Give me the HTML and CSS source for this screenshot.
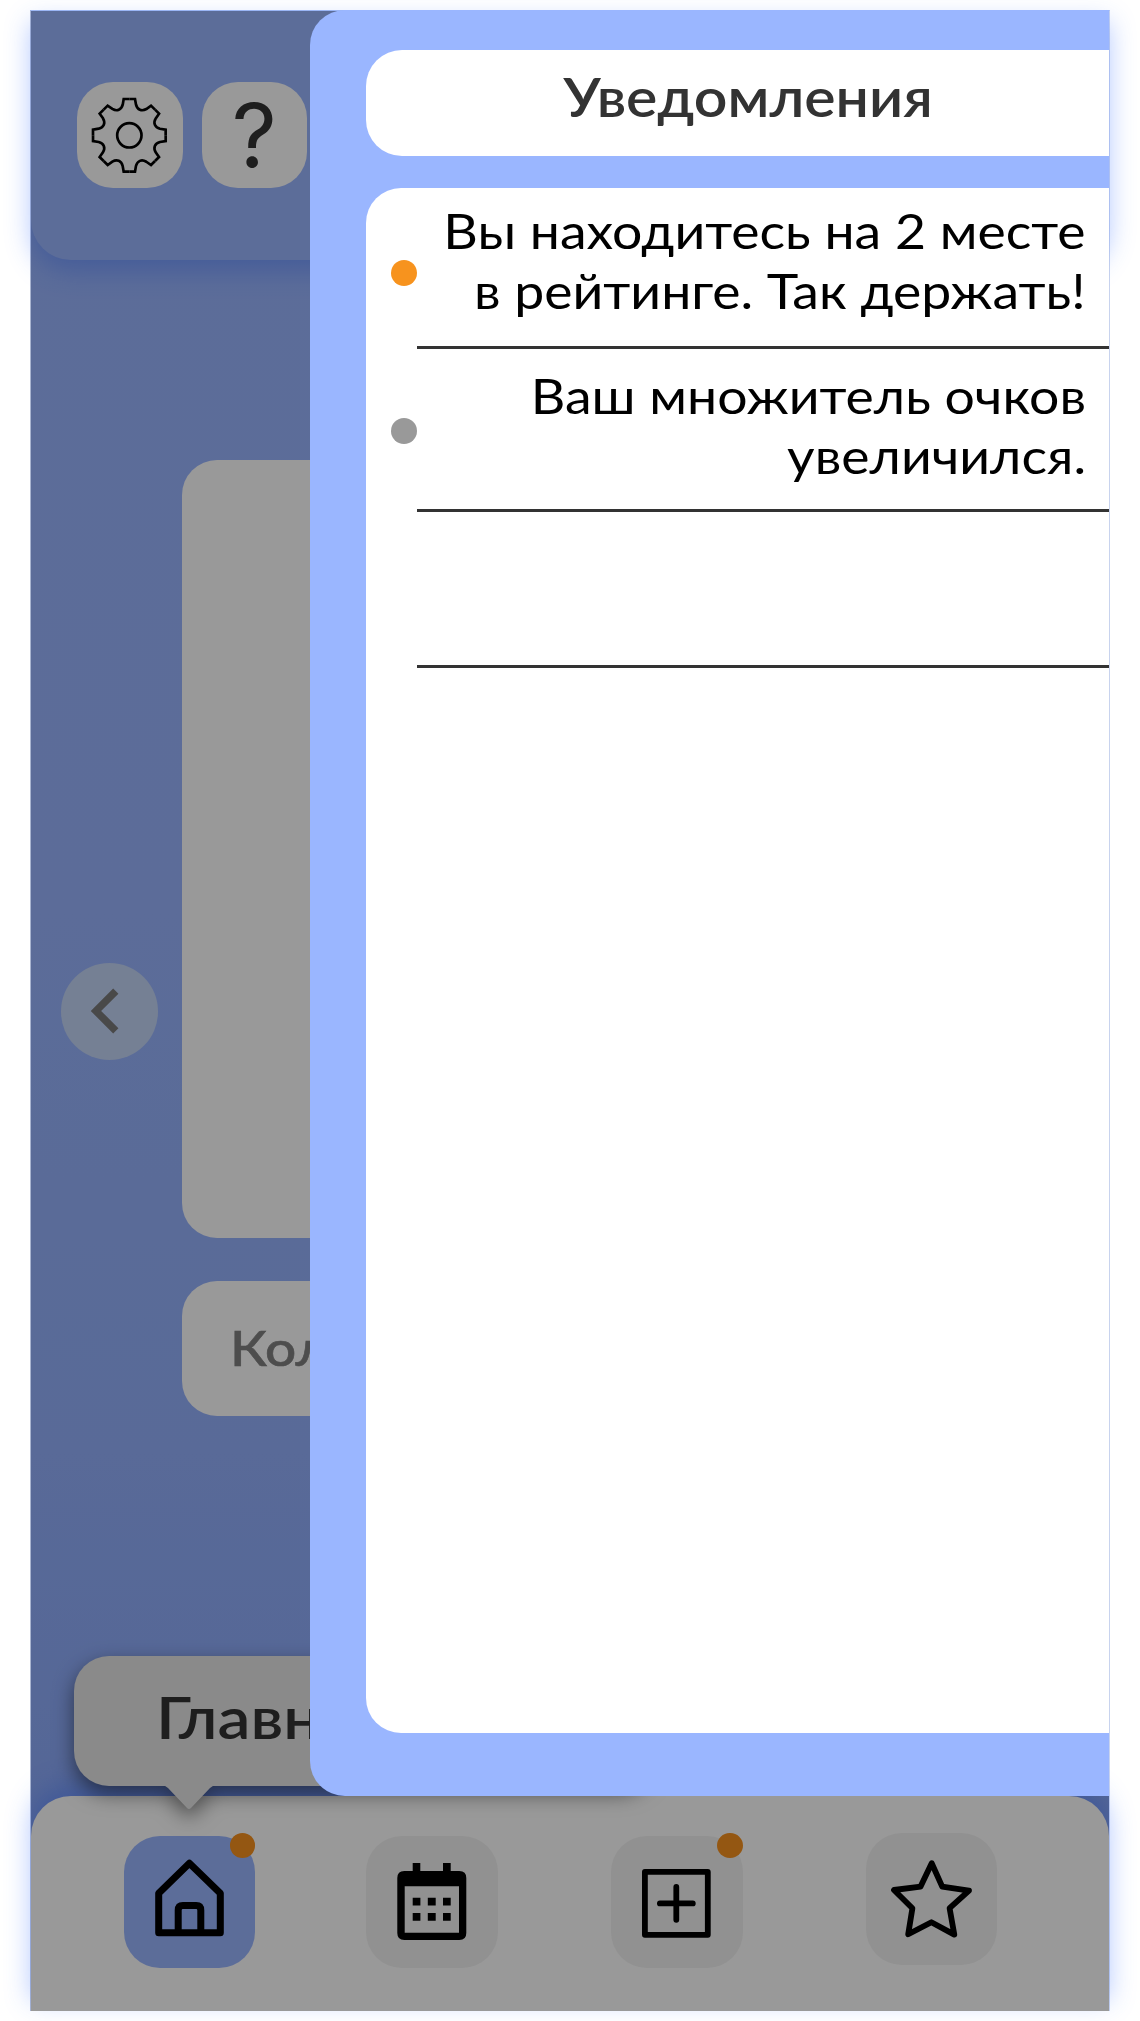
FILE: index.html
```html
<!DOCTYPE html>
<html lang="ru">
<head>
<meta charset="utf-8">
<title>Уведомления</title>
<link rel="stylesheet" href="styles.css">
</head>
<body>
<div class="phone">
  <header class="header">
    <button class="tool" aria-label="Настройки">
      <svg class="gear" viewBox="-115 -115 230 230">
        <defs><path id="tooth" d="M0-109H17L20-92C24-76 37-71 51-79L65-89L77-77"/></defs>
        <use href="#tooth"/><use href="#tooth" transform="rotate(45)"/><use href="#tooth" transform="rotate(90)"/><use href="#tooth" transform="rotate(135)"/><use href="#tooth" transform="rotate(180)"/><use href="#tooth" transform="rotate(225)"/><use href="#tooth" transform="rotate(270)"/><use href="#tooth" transform="rotate(315)"/>
        <circle r="36.5"/>
      </svg>
    </button>
    <button class="tool" aria-label="Помощь"><span class="question">?</span></button>
  </header>

  <main class="main">
    <button class="arrow" aria-label="Назад">
      <svg viewBox="0 0 97 97"><path d="M54.8 28.2L35 48L54.8 67.8"/></svg>
    </button>
    <div class="cards">
      <div class="card"></div>
      <div class="caption"><span class="caption-text">Кол</span></div>
    </div>
  </main>

  <nav class="nav">
    <a class="tab tab-active">
      <svg class="line" viewBox="0 0 131 131" stroke-width="7"><path d="M34.7 57.3L65.4 27.3L96.3 57.3V96.7H34.7ZM54.2 96.7V74.3Q54.2 69.6 58.9 69.6H72.2Q76.8 69.6 76.8 74.3V96.7"/></svg>
      <i class="badge"></i>
    </a>
    <a class="tab">
      <svg viewBox="0 0 131 131"><path fill-rule="evenodd" d="M46.7 35V27H54.3V35H77V27H84.7V35H93.3Q100.3 35 100.3 42V97Q100.3 104 93.3 104H38.3Q31.3 104 31.3 97V42Q31.3 35 38.3 35ZM38.7 50.3V96.7H93V50.3Z"/><path d="M46.7 61.8h7.7v7.8h-7.7zM61.8 61.8h7.9v7.8h-7.9zM77 61.8h7.7v7.8h-7.7zM46.7 77h7.7v7.8h-7.7zM61.8 77h7.9v7.8h-7.9zM77 77h7.7v7.8h-7.7z"/></svg>
    </a>
    <a class="tab">
      <svg class="line" viewBox="0 0 131 131" stroke-width="5.8"><path d="M33.9 35.9H96.8V98.8H33.9ZM48.9 67.4H81.8M65.3 51V83.8"/></svg>
      <i class="badge"></i>
    </a>
    <a class="tab tab-star">
      <svg class="line" viewBox="0 0 131 131" stroke-width="5.8"><path d="M65.7 30.2L76.2 53.6L103 57.6L83.6 75.2L88.3 101.6L65.4 89.2L42.2 101.3L46.4 75.2L28 57L54.6 53.6Z"/></svg>
    </a>
  </nav>

  <div class="tooltip"><span class="tooltip-text">Главная</span></div>
  <div class="shade"></div>

  <aside class="panel">
    <h1 class="title"><span class="title-text">Уведомления</span></h1>
    <ul class="list">
      <li class="row row-first">
        <i class="dot dot-new"></i>
        <p class="message"><span class="text">Вы находитесь на 2 месте<br>в рейтинге. Так держать!</span></p>
      </li>
      <li class="row row-second">
        <i class="dot"></i>
        <p class="message"><span class="text">Ваш множитель очков<br>увеличился.</span></p>
      </li>
      <li class="row row-empty"><p class="message"></p></li>
    </ul>
  </aside>
</div>
</body>
</html>
```
FILE: styles.css
```css
* { box-sizing: border-box; }
body { margin: 0; background: #fff; font-family: Lato, "Open Sans", sans-serif; overflow: hidden; }
button { border: 0; padding: 0; font: inherit; }

.phone {
  position: relative;
  display: flex;
  flex-direction: column;
  width: 1080px;
  height: 2001px;
  margin: 10px 30px;
  border: 1px solid #c8d3ee;
  border-top-color: #a3bcf5;
  border-left-color: #aab5d0;
  border-bottom: 0;
  background: linear-gradient(#9ab6ff, #99b5ff 45%, #94b1fd 72%, #89a8fb);
}

.header {
  display: flex;
  gap: 19px;
  height: 249px;
  padding: 71px 46px;
  background: #9ab6ff;
  border-radius: 0 0 40px 40px;
  box-shadow: 0 11px 26px rgba(54, 110, 255, .38);
}
.tool {
  display: flex;
  align-items: center;
  justify-content: center;
  width: 105.5px;
  height: 106px;
  border-radius: 36px;
  background: #fff;
}
.gear { width: 76.7px; height: 76.7px; fill: none; stroke: #000; stroke-width: 8; }
.question { font-family: Inter, sans-serif; font-size: 88px; line-height: 106px; color: #333; }

.main { flex: 1; display: flex; align-items: flex-start; gap: 24.5px; padding: 200px 30px 0; }
.arrow { width: 96.5px; height: 96.5px; margin-top: 503px; border-radius: 50%; background: #c3d5f7; }
.arrow svg { display: block; width: 97px; height: 97px; fill: none; stroke: #7a7a7a; stroke-width: 7.4; }
.cards { display: flex; flex-direction: column; gap: 43px; width: 775px; }
.card { height: 778px; border-radius: 35px; background: #fff; }
.caption { height: 135px; padding-left: 48px; border-radius: 35px; background: #fff; }
.caption-text { display: inline-block; font-size: 49px; font-weight: 500; line-height: 133px; color: #808080; transform: scaleX(1.12); transform-origin: left; -webkit-text-stroke: .6px #808080; }

.nav {
  display: flex;
  height: 215px;
  padding: 40px 0 0 92.5px;
  border-radius: 40px 40px 0 0;
  background: #fff;
  box-shadow: 0 -11px 26px rgba(54, 110, 255, .38);
}
.tab { position: relative; width: 131.5px; height: 131.5px; margin-right: 111px; border-radius: 36px; background: #f2f2f2; }
.tab:nth-child(2) { margin-right: 113.5px; }
.tab:nth-child(3) { margin-right: 123px; }
.tab-active { background: #9ab6ff; }
.tab-star { margin: -3px 0 0; }
.tab svg { display: block; width: 131px; height: 131px; }
.line { fill: none; stroke: #000; stroke-linejoin: round; stroke-linecap: round; }
.badge { position: absolute; top: -3px; right: 0; width: 25.5px; height: 25px; border-radius: 50%; background: #f7911e; }

.tooltip {
  position: absolute;
  left: 43px;
  top: 1645px;
  width: 580px;
  height: 130px;
  padding-left: 82px;
  border-radius: 35px;
  background: #e6e6e6;
  filter: drop-shadow(0 8px 10px rgba(0, 0, 0, .5));
}
.tooltip::after {
  content: "";
  position: absolute;
  left: 87px;
  top: 129px;
  width: 56px;
  height: 25px;
  background: #e6e6e6;
  clip-path: path("M0 0Q4 0 7 3L26 23Q28 25 30 23L49 3Q52 0 56 0Z");
}
.tooltip-text { display: inline-block; font-size: 58px; font-weight: 600; line-height: 122px; color: #333; transform: scaleX(1.13); transform-origin: left; }

.shade { position: absolute; inset: 0; background: rgba(0, 0, 0, .4); }

.panel {
  position: absolute;
  top: -1px;
  right: 0;
  width: 799px;
  height: 1786px;
  padding: 40px 0 63px 56px;
  display: flex;
  flex-direction: column;
  gap: 32px;
  border-radius: 35px 0 0 35px;
  background: #9ab6ff;
}
.title {
  flex: none;
  height: 106px;
  margin: 0;
  padding: 0 0 13px 20px;
  border-radius: 36px 0 0 36px;
  background: #fff;
  color: #333;
  font-size: 53px;
  font-weight: 600;
  line-height: 94px;
  text-align: center;
}
.title-text { display: inline-block; transform: scaleX(1.113); }
.list { flex: 1; margin: 0; padding: 0; list-style: none; border-radius: 35px 0 0 35px; background: #fff; }
.row { display: flex; justify-content: flex-end; }
.dot { flex: none; width: 26px; height: 26px; border-radius: 50%; background: #999; }
.dot-new { background: #f7931e; }
.message { width: 692px; height: 100%; margin: 0; padding-right: 23px; border-bottom: 3px solid #333; text-align: right; }
.text { display: inline-block; font-size: 49px; line-height: 60px; color: #000; transform: scaleX(1.093); transform-origin: right; }
.row-first { height: 161px; }
.row-first .dot { margin-top: 72px; }
.row-first .message { padding-top: 12px; }
.row-second { height: 163px; }
.row-second .dot { margin-top: 69px; }
.row-second .message { padding-top: 16px; }
.row-empty { height: 156px; }
```
